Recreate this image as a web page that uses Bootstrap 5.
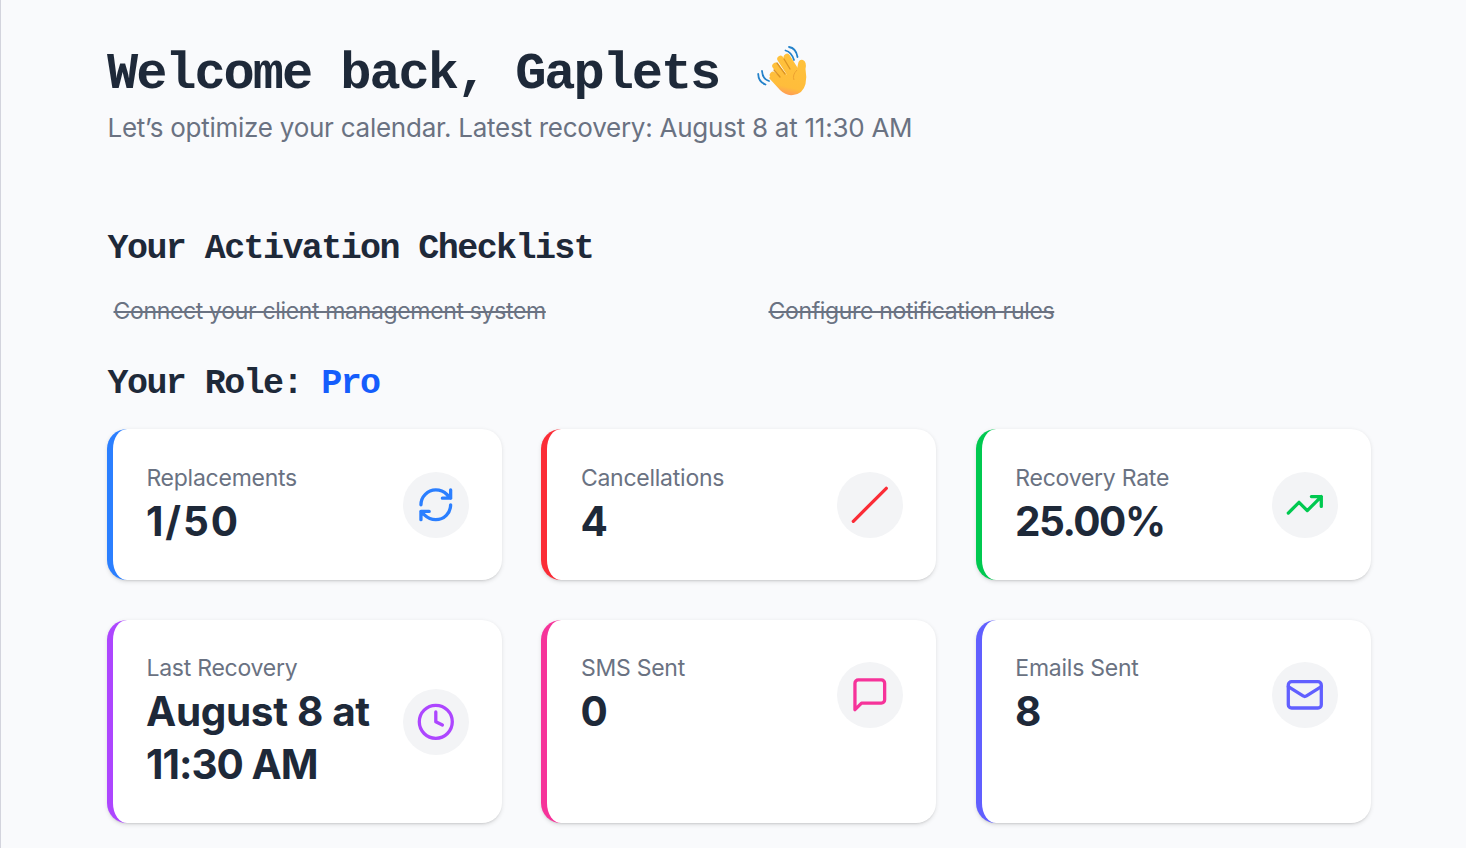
<!DOCTYPE html>
<html lang="en">
<head>
<meta charset="utf-8">
<meta name="viewport" content="width=device-width, initial-scale=1">
<title>Dashboard</title>
<link href="https://cdn.jsdelivr.net/npm/bootstrap@5.3.0/dist/css/bootstrap.min.css" rel="stylesheet">
<style>
body{background:#f9fafc;color:#1e2939;font-family:Inter,"Liberation Sans",sans-serif;min-height:848px;overflow:hidden}
.shell{border-left:1px solid #d3d4dd;min-height:848px;padding:41px 95px 20px 106px}
.mono{font-family:"Liberation Mono",monospace;font-weight:700;margin:0;white-space:pre}
.title{font-size:52px;letter-spacing:-2.05px;line-height:60px;padding-top:4px;margin-bottom:-4px}
.wave{width:50px;height:50px;margin-left:38px}
.intro{font-size:26px;line-height:40px;color:#6a7282;letter-spacing:-.25px;margin:7px 0 0 .5px}
.checklist{margin-top:78px}
.role{margin-top:29.500px}
.section-title{font-size:35px;letter-spacing:-1.58px;line-height:46px;padding-left:.6px}
.steps{margin-top:19px;color:#6a7282;font-size:23px;line-height:40px;text-decoration:line-through;text-decoration-thickness:2px;letter-spacing:-.34px}
.step-first{padding-left:6.500px}
.step-second{padding-left:29.500px}
.pro{color:#155dfc}
.stats{display:grid;grid-template-columns:repeat(3,394.8px);column-gap:39.7px;row-gap:40px;margin-top:22.500px}
.stat{background:#fff;border-left:6px solid var(--tone);border-radius:20px;padding:32.5px 33px 32px;box-shadow:0 1.6px 4px rgba(0,0,0,.1),0 1.6px 2px -1px rgba(0,0,0,.1)}
.label-text{color:#6a7282;font-size:23px;line-height:33px;letter-spacing:-.25px;padding-left:.4px}
.value{font-size:40.500px;font-weight:700;line-height:53px;letter-spacing:-.35px}
.value-open{letter-spacing:1.900px}
.value-tight{letter-spacing:-1.500px}
.value-time{letter-spacing:-1px}
.dot{width:66px;height:66px;background:#f3f4f6;color:var(--tone)}
.dot svg{width:39.6px;height:39.6px;fill:none;stroke:currentColor;stroke-width:2;stroke-linecap:round;stroke-linejoin:round}
</style>
</head>
<body>
<main class="shell">
  <header>
    <div class="d-flex align-items-center">
      <h1 class="mono title">Welcome back, Gaplets</h1>
      <svg class="wave" viewBox="0 0 50 50" role="img" aria-label="Waving hand">
        <defs><linearGradient id="skin" gradientUnits="userSpaceOnUse" x1="32" y1="8" x2="22" y2="50"><stop offset="0" stop-color="#ffc23c"/><stop offset=".75" stop-color="#ffbd3b"/><stop offset="1" stop-color="#ff8f63"/></linearGradient></defs>
        <g stroke="url(#skin)" stroke-width="6.500" stroke-linecap="round" fill="none"><path d="M30 11l10 16M23.500 13l11 17M18.500 20l12 15M16 29l10 10"/></g>
        <path d="M14 30Q21 26 28 30L36 26Q40 26 41 18Q42 13 46 14Q50 16 48.500 23Q50 31 48.500 38Q46 48 36 49Q29 50 23 44L12 32Z" fill="url(#skin)"/>
        <path d="M20 17l8 11M17 24l6 7M27 13l6 10" stroke="#dc9424" stroke-width="1.300" stroke-linecap="round" fill="none"/>
        <path d="M40 24Q35 29 37 34" stroke="#eea331" stroke-width="1" fill="none"/>
        <path d="M32 1Q39 2 40.500 11M28.500 4.500Q34.500 6 37 14M5 25Q5.500 33 12 35M1.200 28Q1.500 36 8.500 38.500" stroke="#2482ca" stroke-width="1.800" stroke-linecap="round" fill="none"/>
      </svg>
    </div>
    <p class="intro">Let’s optimize your calendar. Latest recovery: August 8 at 11:30 AM</p>
  </header>
  <section class="checklist">
    <h2 class="mono section-title">Your Activation Checklist</h2>
    <div class="steps row g-0">
      <div class="col-6 step-first"><span>Connect your client management system</span></div>
      <div class="col-6 step-second"><span>Configure notification rules</span></div>
    </div>
  </section>
  <section class="role">
    <h2 class="mono section-title">Your Role: <span class="pro">Pro</span></h2>
    <div class="stats">
      <article class="stat" style="--tone:#2b7fff">
        <div class="d-flex align-items-center justify-content-between"><div><div class="label-text">Replacements</div><div class="value value-open">1/50</div></div>
        <span class="dot rounded-circle d-flex align-items-center justify-content-center flex-shrink-0"><svg viewBox="0 0 24 24"><path d="M3 12a9 9 0 0 1 9-9 9.750 9.750 0 0 1 6.740 2.740L21 8M21 3v5h-5M21 12a9 9 0 0 1-9 9 9.750 9.750 0 0 1-6.740-2.740L3 16M8 16H3v5"/></svg></span></div>
      </article>
      <article class="stat" style="--tone:#fb2c36">
        <div class="d-flex align-items-center justify-content-between"><div><div class="label-text">Cancellations</div><div class="value">4</div></div>
        <span class="dot rounded-circle d-flex align-items-center justify-content-center flex-shrink-0"><svg viewBox="0 0 24 24"><path d="M22 2 2 22"/></svg></span></div>
      </article>
      <article class="stat" style="--tone:#00c950">
        <div class="d-flex align-items-center justify-content-between"><div><div class="label-text">Recovery Rate</div><div class="value value-tight">25.00%</div></div>
        <span class="dot rounded-circle d-flex align-items-center justify-content-center flex-shrink-0"><svg viewBox="0 0 24 24"><path d="m22 7-8.500 8.500-5-5L2 17M16 7h6v6"/></svg></span></div>
      </article>
      <article class="stat" style="--tone:#ad46ff">
        <div class="d-flex align-items-center justify-content-between"><div><div class="label-text">Last Recovery</div><div class="value">August 8 at<br><span class="value-time">11:30 AM</span></div></div>
        <span class="dot rounded-circle d-flex align-items-center justify-content-center flex-shrink-0"><svg viewBox="0 0 24 24"><circle cx="12" cy="12" r="10"/><path d="M12 6v6l4 2"/></svg></span></div>
      </article>
      <article class="stat" style="--tone:#f6339a">
        <div class="d-flex align-items-center justify-content-between"><div><div class="label-text">SMS Sent</div><div class="value">0</div></div>
        <span class="dot rounded-circle d-flex align-items-center justify-content-center flex-shrink-0"><svg viewBox="0 0 24 24"><path d="M21 15a2 2 0 0 1-2 2H7l-4 4V5a2 2 0 0 1 2-2h14a2 2 0 0 1 2 2z"/></svg></span></div>
      </article>
      <article class="stat" style="--tone:#615fff">
        <div class="d-flex align-items-center justify-content-between"><div><div class="label-text">Emails Sent</div><div class="value">8</div></div>
        <span class="dot rounded-circle d-flex align-items-center justify-content-center flex-shrink-0"><svg viewBox="0 0 24 24"><rect x="2" y="4" width="20" height="16" rx="2"/><path d="m22 7-8.970 5.700a1.940 1.940 0 0 1-2.060 0L2 7"/></svg></span></div>
      </article>
    </div>
  </section>
</main>
<script src="https://cdn.jsdelivr.net/npm/bootstrap@5.3.0/dist/js/bootstrap.bundle.min.js"></script>
</body>
</html>
